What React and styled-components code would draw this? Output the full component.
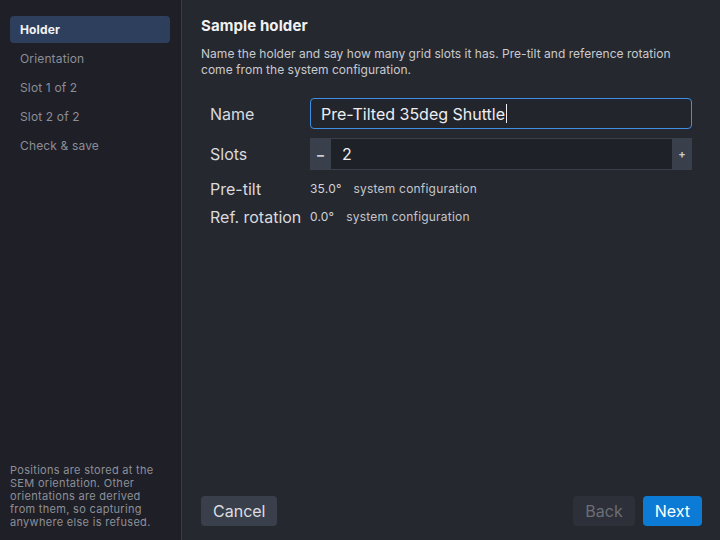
import React from "react";
import styled, { createGlobalStyle } from "styled-components";

const Global = createGlobalStyle`
  html, body { margin: 0; padding: 0; background: #262830; }
  body { font-family: Inter, "Noto Sans", sans-serif; -webkit-font-smoothing: antialiased; }
  * { box-sizing: border-box; }
`;

const Shell = styled.div`
  display: flex;
  width: 720px;
  height: 540px;
  overflow: hidden;
  background: #262830;
`;

const Sidebar = styled.aside`
  width: 182px;
  flex: none;
  background: #1e1f27;
  border-right: 1px solid #3a3c46;
  display: flex;
  flex-direction: column;
  justify-content: space-between;
  padding: 16px 11px 11px 10px;
`;

const StepList = styled.nav`
  display: flex;
  flex-direction: column;
  gap: 2px;
`;

const Step = styled.div`
  height: 27px;
  display: flex;
  align-items: center;
  padding-left: 10px;
  border-radius: 4px;
  font-size: 12px;
  letter-spacing: 0.15px;
  font-weight: ${p => (p.$active ? 700 : 400)};
  color: ${p => (p.$active ? "#f2f3f5" : "#8b8e96")};
  background: ${p => (p.$active ? "#2e3f5d" : "transparent")};
`;

const SideNote = styled.p`
  margin: 0;
  max-width: 152px;
  font-size: 11px;
  line-height: 13px;
  letter-spacing: 0.3px;
  color: #8d9098;
`;

const Main = styled.main`
  flex: 1;
  display: flex;
  flex-direction: column;
  padding: 16px 18px 14px 19px;
`;

const Title = styled.h1`
  margin: 0;
  font-size: 15px;
  line-height: 20px;
  font-weight: 700;
  letter-spacing: 0.1px;
  color: #f1f2f4;
`;

const Description = styled.p`
  margin: 10px 0 0;
  font-size: 12px;
  line-height: 16px;
  letter-spacing: 0.03px;
  color: #c9cace;
`;

const Form = styled.div`
  margin: 20px 10px 0 9px;
  display: grid;
  grid-template-columns: 100px 1fr;
  grid-auto-rows: auto;
  row-gap: 9px;
  align-items: center;
`;

const Label = styled.div`
  font-size: 16px;
  color: #d9dadd;
  height: ${p => p.$h || 19}px;
  display: flex;
  align-items: center;
  white-space: nowrap;
`;

const TextField = styled.div`
  height: 31px;
  border: 1px solid #3f8fe3;
  border-radius: 4px;
  background: #23252d;
  display: flex;
  align-items: center;
  padding-left: 10px;
  font-size: 16px;
  color: #eceef1;
`;

const Caret = styled.span`
  display: inline-block;
  width: 1px;
  height: 19px;
  background: #eceef1;
  margin-left: 1px;
`;

const Spinner = styled.div`
  height: 32px;
  display: flex;
  background: #3a3f4c;
`;

const SpinButton = styled.div`
  width: ${p => p.$w}px;
  flex: none;
  display: flex;
  align-items: center;
  justify-content: center;
  color: #c9ccd3;
  font-size: ${p => p.$fs}px;
  font-weight: 700;
`;

const SpinValue = styled.div`
  flex: 1;
  background: #1f2128;
  display: flex;
  align-items: center;
  padding-left: 11px;
  font-size: 16px;
  color: #eceef1;
  margin: 1px 0;
`;

const ValueLine = styled.div`
  height: 19px;
  display: flex;
  align-items: center;
  gap: 12px;
  font-size: 12px;
  letter-spacing: 0.2px;
  color: #d2d3d7;
`;

const Source = styled.span`
  color: #c3c5ca;
`;

const Spacer = styled.div`
  flex: 1;
`;

const Footer = styled.div`
  display: flex;
  align-items: center;
  gap: 8px;
`;

const Button = styled.button`
  height: 30px;
  padding: 0 ${p => p.$px || 12}px;
  border: none;
  border-radius: 4px;
  font-family: inherit;
  font-size: 16px;
  cursor: pointer;
  background: ${p =>
    p.$variant === "primary" ? "#0b7bd5" : p.$variant === "disabled" ? "#2d3039" : "#3a3f4c"};
  color: ${p =>
    p.$variant === "primary" ? "#ffffff" : p.$variant === "disabled" ? "#6b6e76" : "#dcdde1"};
`;

const steps = ["Holder", "Orientation", "Slot 1 of 2", "Slot 2 of 2", "Check & save"];

export default function App() {
  return (
    <>
      <Global />
      <Shell>
        <Sidebar>
          <StepList>
            {steps.map((s, i) => (
              <Step key={s} $active={i === 0}>
                {s}
              </Step>
            ))}
          </StepList>
          <SideNote>
            Positions are stored at the SEM orientation. Other orientations are derived from them, so
            capturing anywhere else is refused.
          </SideNote>
        </Sidebar>
        <Main>
          <Title>Sample holder</Title>
          <Description>
            Name the holder and say how many grid slots it has. Pre-tilt and reference rotation come
            from the system configuration.
          </Description>
          <Form>
            <Label $h={31}>Name</Label>
            <TextField>
              Pre-Tilted 35deg Shuttle
              <Caret />
            </TextField>
            <Label $h={32}>Slots</Label>
            <Spinner>
              <SpinButton $w={21} $fs={14}>−</SpinButton>
              <SpinValue>2</SpinValue>
              <SpinButton $w={20} $fs={11}>+</SpinButton>
            </Spinner>
            <Label>Pre-tilt</Label>
            <ValueLine>
              <span>35.0°</span>
              <Source>system configuration</Source>
            </ValueLine>
            <Label>Ref. rotation</Label>
            <ValueLine>
              <span>0.0°</span>
              <Source>system configuration</Source>
            </ValueLine>
          </Form>
          <Spacer />
          <Footer>
            <Button $px={12}>Cancel</Button>
            <Spacer />
            <Button $variant="disabled" $px={12}>Back</Button>
            <Button $variant="primary" $px={12}>Next</Button>
          </Footer>
        </Main>
      </Shell>
    </>
  );
}
